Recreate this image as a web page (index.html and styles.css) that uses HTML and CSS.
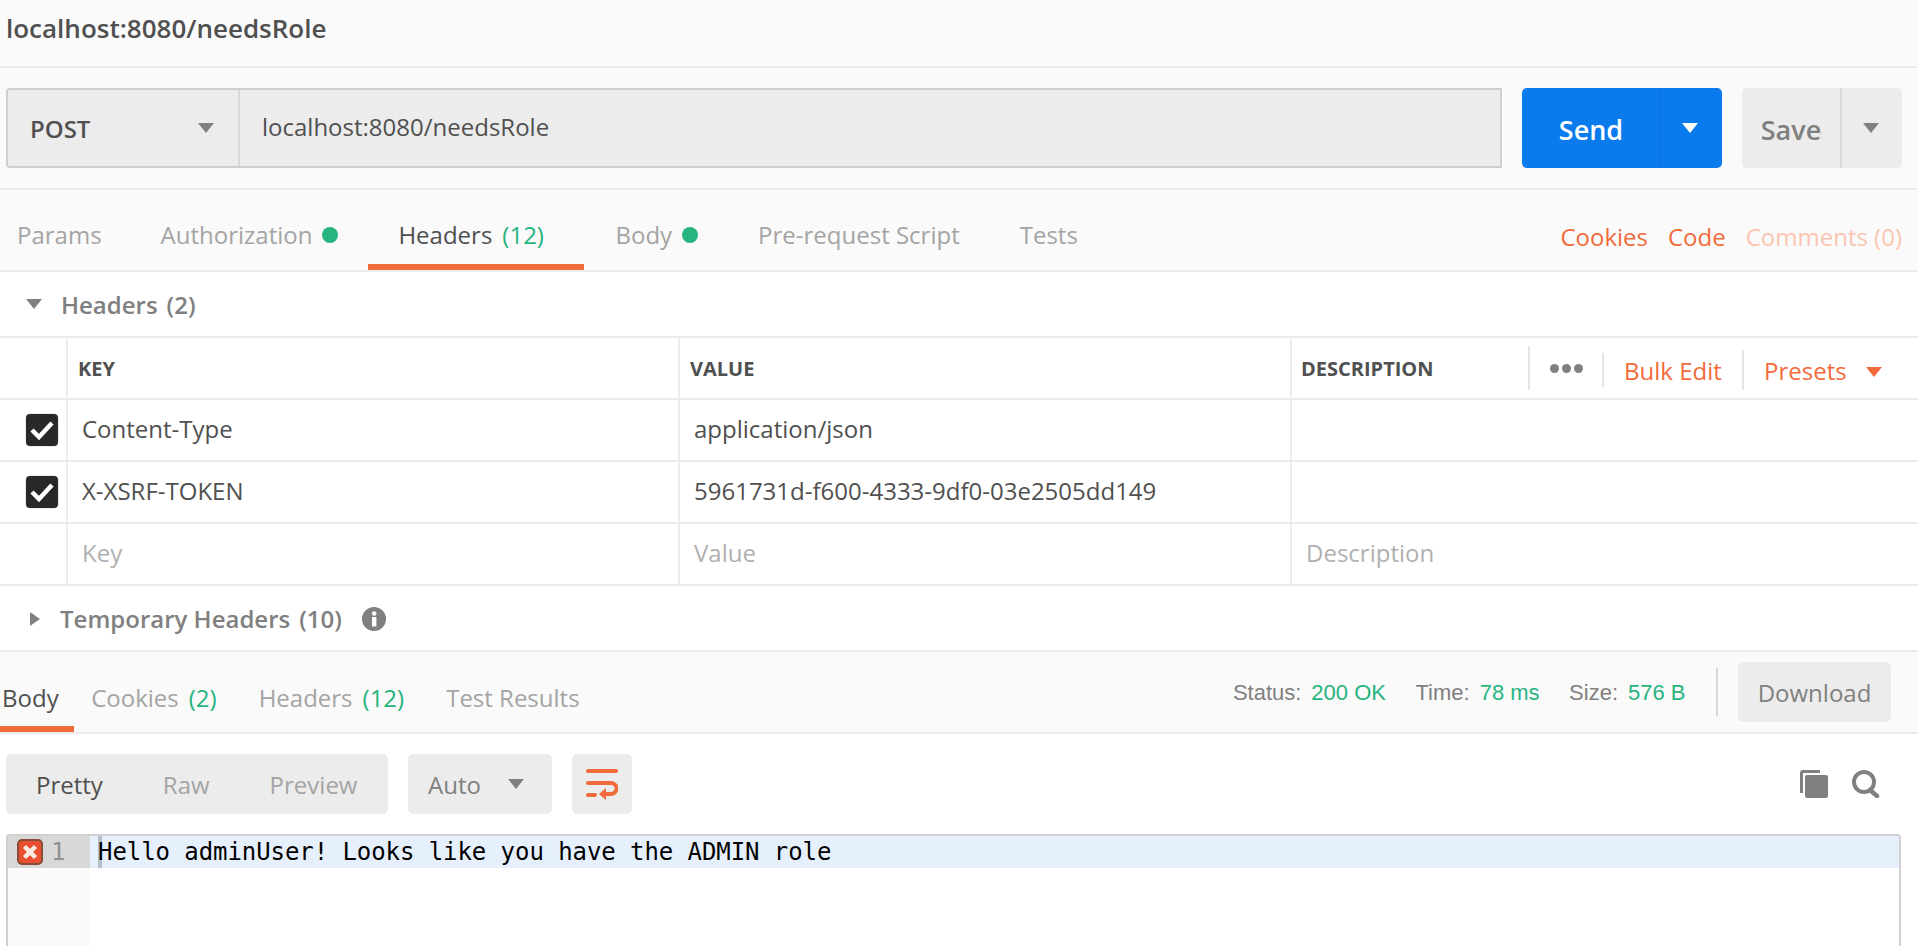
FILE: index.html
```html
<!DOCTYPE html>
<html lang="en">
<head>
    <meta charset="UTF-8">
    <title>localhost:8080/needsRole</title>
    <link rel="stylesheet" href="styles.css">
</head>
<body>
    <!-- Request -->
    <div class="title-bar">localhost:8080/needsRole</div>

    <div class="url-row">
        <div class="url-box">
            <div class="method">POST<span class="caret"></span></div>
            <div class="url-text">localhost:8080/needsRole</div>
        </div>
        <div class="send-btn">
            <span class="send-label">Send</span>
            <span class="send-arrow"><span class="caret caret-white"></span></span>
        </div>
        <div class="save-btn">
            <span class="save-label">Save</span>
            <span class="save-arrow"><span class="caret"></span></span>
        </div>
    </div>

    <div class="tabs">
        <span class="tab tab-first">Params</span>
        <span class="tab">Authorization<i class="dot"></i></span>
        <span class="tab tab-active">Headers<em class="count">(12)</em></span>
        <span class="tab">Body<i class="dot"></i></span>
        <span class="tab">Pre-request Script</span>
        <span class="tab">Tests</span>
        <div class="tab-links">
            <span class="link">Cookies</span>
            <span class="link">Code</span>
            <span class="link link-faded">Comments (0)</span>
        </div>
    </div>

    <div class="section-title">
        <span class="caret"></span>Headers<span class="section-count">(2)</span>
    </div>

    <div class="kv-table">
        <div class="kv-row kv-head">
            <div class="cell"></div>
            <div class="cell head-cell">KEY</div>
            <div class="cell head-cell">VALUE</div>
            <div class="cell head-cell desc-head">
                <span class="desc-label">DESCRIPTION</span>
                <span class="sep sep-a"></span>
                <span class="dots"><i></i><i></i><i></i></span>
                <span class="sep sep-b"></span>
                <span class="link bulk">Bulk Edit</span>
                <span class="sep sep-c"></span>
                <span class="link presets">Presets</span>
                <span class="caret caret-orange"></span>
            </div>
        </div>
        <div class="kv-row">
            <div class="cell check-cell">
                <span class="check"><svg width="24" height="24" viewBox="0 0 24 24"><path d="M2 12l7 7L22 5" fill="none" stroke="#fff" stroke-width="4.500"/></svg></span>
            </div>
            <div class="cell">Content-Type</div>
            <div class="cell">application/json</div>
            <div class="cell"></div>
        </div>
        <div class="kv-row">
            <div class="cell check-cell">
                <span class="check"><svg width="24" height="24" viewBox="0 0 24 24"><path d="M2 12l7 7L22 5" fill="none" stroke="#fff" stroke-width="4.500"/></svg></span>
            </div>
            <div class="cell">X-XSRF-TOKEN</div>
            <div class="cell">5961731d-f600-4333-9df0-03e2505dd149</div>
            <div class="cell"></div>
        </div>
        <div class="kv-row kv-empty">
            <div class="cell"></div>
            <div class="cell">Key</div>
            <div class="cell">Value</div>
            <div class="cell">Description</div>
        </div>
    </div>

    <div class="section-title temp-title">
        <span class="caret-right"></span>Temporary Headers<span class="section-count">(10)</span>
        <svg class="info" width="24" height="24" viewBox="0 0 24 24"><circle cx="12" cy="12" r="12" fill="#808080"/><rect x="10" y="10" width="4.400" height="9.500" fill="#fff"/><circle cx="12.200" cy="6.500" r="2.300" fill="#fff"/></svg>
    </div>

    <!-- Response -->
    <div class="res-tabs">
        <span class="res-tab res-active">Body</span>
        <span class="res-tab res-cookies">Cookies<em class="count">(2)</em></span>
        <span class="res-tab">Headers<em class="count">(12)</em></span>
        <span class="res-tab">Test Results</span>
        <div class="res-meta">
            <span class="meta-label">Status:</span><span class="meta-value">200 OK</span>
            <span class="meta-label">Time:</span><span class="meta-value">78 ms</span>
            <span class="meta-label">Size:</span><span class="meta-value">576 B</span>
            <span class="meta-sep"></span>
            <span class="download">Download</span>
        </div>
    </div>

    <div class="res-tools">
        <div class="view-group">
            <span class="view view-active">Pretty</span>
            <span class="view view-raw">Raw</span>
            <span class="view view-preview">Preview</span>
        </div>
        <div class="auto-box">Auto<span class="caret"></span></div>
        <div class="wrap-btn">
            <svg width="32" height="32" viewBox="0 0 32 32" fill="none" stroke="#f26b3a" stroke-width="4" stroke-linecap="round">
                <path d="M2 3h28"/>
                <path d="M2 15h23a5 5 0 0 1 0 11h-5"/>
                <path d="M2 27h7"/>
                <path d="M20 20v12l-7-6z" fill="#f26b3a" stroke="none"/>
            </svg>
        </div>
        <div class="tool-icons">
            <svg width="28" height="28" viewBox="0 0 28 28"><path d="M0 3a3 3 0 0 1 3-3h17v3H3v20H0z" fill="#808080"/><path d="M5 7a2 2 0 0 1 2-2h19a2 2 0 0 1 2 2v19a2 2 0 0 1-2 2H7a2 2 0 0 1-2-2z" fill="#808080"/></svg>
            <svg width="28" height="28" viewBox="0 0 28 28" fill="none" stroke="#808080"><circle cx="12" cy="12" r="10" stroke-width="4"/><path d="M18 20l7 6" stroke-width="4.500" stroke-linecap="round"/></svg>
        </div>
    </div>

    <div class="editor">
        <div class="gutter">
            <div class="gutter-active">
                <svg class="err" width="26" height="26" viewBox="0 0 26 26"><rect x="1" y="1" width="24" height="24" rx="4" fill="#e9502f" stroke="#8a4a38" stroke-width="2"/><path d="M7.500 7.500l11 11M18.500 7.500l-11 11" stroke="#fbe9e4" stroke-width="4.500"/></svg>
                <span class="line-no">1</span>
            </div>
        </div>
        <div class="code">
            <div class="code-line"><span class="cursor"></span><span class="code-text">Hello adminUser! Looks like you have the ADMIN role</span></div>
        </div>
    </div>
</body>
</html>
```

FILE: styles.css
```css
html, body {
    height: 100%;
}

body {
    margin: 0;
    background-color: #fff;
    color: #505050;
    font-family: "Open Sans", sans-serif;
    font-size: 24px;
    overflow: hidden;
}

em, i {
    font-style: normal;
}

.caret {
    display: inline-block;
    width: 0;
    height: 0;
    border-left: 8px solid transparent;
    border-right: 8px solid transparent;
    border-top: 10px solid #808080;
}

.caret-white {
    border-top-color: #fff;
}

.caret-orange {
    border-top-color: #f26b3a;
}

.caret-right {
    display: inline-block;
    width: 0;
    height: 0;
    border-top: 7px solid transparent;
    border-bottom: 7px solid transparent;
    border-left: 10px solid #808080;
    margin: 0 20px 0 30px;
}

.link {
    color: #f26b3a;
}

.count {
    color: #26b47f;
    margin-left: 10px;
}

.title-bar {
    height: 68px;
    box-sizing: border-box;
    padding: 0 0 11px 6px;
    display: flex;
    align-items: center;
    background-color: #fafafa;
    border-bottom: 2px solid #ececec;
    font-size: 26px;
    font-weight: 600;
}

.url-row {
    height: 122px;
    box-sizing: border-box;
    padding: 20px 16px 20px 6px;
    display: flex;
    background-color: #fafafa;
    border-bottom: 2px solid #ececec;
}

.url-box {
    width: 1496px;
    box-sizing: border-box;
    display: flex;
    background-color: #ececec;
    border: 2px solid #d0d0d0;
    border-radius: 4px 0 0 4px;
}

.method {
    width: 232px;
    box-sizing: border-box;
    padding: 0 24px 0 22px;
    display: flex;
    align-items: center;
    justify-content: space-between;
    border-right: 2px solid #d8d8d8;
    font-weight: 600;
}

.url-text {
    padding: 0 0 4px 22px;
    display: flex;
    align-items: center;
}

.send-btn, .save-btn {
    height: 80px;
    display: flex;
    border-radius: 5px;
    font-weight: 600;
    font-size: 27px;
}

.send-btn {
    width: 200px;
    margin-left: 20px;
    background-color: #097bed;
    color: #fff;
}

.send-label {
    width: 138px;
    padding-top: 2px;
    display: flex;
    align-items: center;
    justify-content: center;
    border-right: 1px solid #0a6ed2;
}

.send-arrow, .save-arrow {
    flex: 1;
    padding-right: 4px;
    display: flex;
    align-items: center;
    justify-content: center;
}

.save-arrow {
    padding-right: 2px;
}

.save-btn {
    width: 160px;
    margin-left: 20px;
    background-color: #ececec;
    color: #808080;
}

.save-label {
    width: 98px;
    padding-top: 2px;
    display: flex;
    align-items: center;
    justify-content: center;
    border-right: 2px solid #d8d8d8;
}

.tabs {
    height: 82px;
    box-sizing: border-box;
    display: flex;
    align-items: stretch;
    background-color: #fafafa;
    border-bottom: 2px solid #ececec;
    color: #a4a4a4;
}

.tab {
    padding: 9px 30px 0;
    display: flex;
    align-items: center;
}

.tab-first {
    padding: 9px 29px 0 17px;
}

.tab-active {
    padding: 15px 40px 0 30px;
    border-bottom: 6px solid #f26b3a;
    color: #505050;
}

.tab-active + .tab {
    margin-left: 1.5px;
}

.dot {
    width: 16px;
    height: 16px;
    margin-left: 10px;
    border-radius: 50%;
    background-color: #26b47f;
}

.tab-links {
    margin-left: auto;
    padding: 13px 16px 0 0;
    display: flex;
    align-items: center;
    gap: 20px;
}

.link-faded {
    color: #fbc5b2;
}

.section-title {
    height: 64px;
    box-sizing: border-box;
    display: flex;
    align-items: center;
    color: #808080;
    font-weight: 600;
}

.section-title .caret {
    margin: 0 19px 0 26px;
}

.section-count {
    margin-left: 9px;
}

.kv-table {
    border-top: 2px solid #ececec;
}

.kv-row {
    height: 62px;
    box-sizing: border-box;
    display: grid;
    grid-template-columns: 68px 612px 612px 1fr;
    border-bottom: 2px solid #ececec;
}

.cell {
    padding: 0 0 4px 14px;
    display: flex;
    align-items: center;
    border-right: 2px solid #ececec;
}

.cell:first-child {
    padding: 0;
}

.cell:last-child {
    border-right: none;
}

.head-cell {
    padding: 0 0 0 10px;
    font-size: 20px;
    font-weight: 700;
}

.desc-head {
    padding-left: 9px;
}

.desc-label {
    width: 227px;
}

.sep {
    width: 2px;
    background-color: #e4e4e4;
}

.sep-a {
    height: 44px;
}

.dots {
    width: 72px;
    padding-left: 20px;
    box-sizing: border-box;
    display: flex;
    gap: 3px;
}

.dots i {
    width: 9px;
    height: 9px;
    border-radius: 50%;
    background-color: #808080;
}

.sep-b {
    height: 34px;
    margin-top: 3px;
}

.bulk {
    width: 138px;
    padding: 4px 0 0 20px;
    box-sizing: border-box;
    font-size: 24px;
    font-weight: 400;
}

.sep-c {
    height: 40px;
    margin-top: 3px;
}

.presets {
    padding: 4px 0 0 20px;
    font-size: 24px;
    font-weight: 400;
}

.desc-head .caret {
    margin: 7px 0 0 19px;
}

.cell.check-cell {
    justify-content: flex-start;
    padding: 0 0 0 26px;
}

.check {
    width: 32px;
    height: 32px;
    flex: none;
    display: flex;
    align-items: center;
    justify-content: center;
    background-color: #282828;
    border-radius: 4px;
    box-shadow: 0 0 0 1px #ececec;
}

.kv-empty {
    color: #b0b0b0;
}

.temp-title {
    height: 66px;
    padding-top: 1px;
    border-bottom: 2px solid #ececec;
}

.info {
    margin-left: 20px;
}

.res-tabs {
    height: 82px;
    box-sizing: border-box;
    display: flex;
    align-items: stretch;
    background-color: #fafafa;
    border-bottom: 2px solid #ececec;
    color: #a4a4a4;
}

.res-tab {
    padding: 11px 21.5px 0 20.5px;
    display: flex;
    align-items: center;
}

.res-active {
    padding: 17px 15px 0 2px;
    border-bottom: 6px solid #f26b3a;
    color: #505050;
}

.res-cookies {
    margin-left: -3px;
}

.res-meta {
    margin-left: auto;
    padding-right: 27px;
    display: flex;
    align-items: center;
    font-family: "Liberation Sans", sans-serif;
    font-size: 22px;
    color: #808080;
}

.meta-label {
    padding-top: 2px;
}

.meta-value {
    padding-top: 2px;
    color: #26b47f;
    margin: 0 29.5px 0 10px;
}

.meta-sep {
    width: 2px;
    height: 48px;
    background-color: #d8d8d8;
    margin-left: 1px;
}

.download {
    width: 153px;
    height: 60px;
    margin-left: 20px;
    display: flex;
    align-items: center;
    justify-content: center;
    background-color: #ececec;
    border-radius: 5px;
    font-family: "Open Sans", sans-serif;
    font-size: 24px;
}

.res-tools {
    height: 100px;
    box-sizing: border-box;
    padding: 20px 38px 20px 6px;
    display: flex;
}

.view-group {
    width: 382px;
    display: flex;
    align-items: center;
    background-color: #ececec;
    border-radius: 5px;
    color: #a4a4a4;
}

.view-active {
    margin-left: 30px;
    color: #505050;
}

.view-raw {
    margin-left: 60px;
}

.view-preview {
    margin-left: 60px;
}

.auto-box {
    width: 144px;
    margin-left: 20px;
    padding: 0 28px 0 20px;
    box-sizing: border-box;
    display: flex;
    align-items: center;
    justify-content: space-between;
    background-color: #ececec;
    border-radius: 5px;
    color: #808080;
}

.wrap-btn {
    width: 60px;
    margin-left: 20px;
    display: flex;
    align-items: center;
    justify-content: center;
    background-color: #ececec;
    border-radius: 5px;
}

.tool-icons {
    margin-left: auto;
    display: flex;
    align-items: center;
    gap: 24px;
}

.editor {
    height: 112px;
    margin: 0 17px 0 6px;
    display: flex;
    border: 2px solid #d0d0d0;
    border-bottom: none;
    border-radius: 4px 4px 0 0;
}

.gutter {
    width: 82px;
    background-color: #fafafa;
}

.gutter-active {
    height: 32px;
    padding-left: 9px;
    display: flex;
    align-items: center;
    background-color: #d8d8d8;
}

.line-no {
    margin-left: 8px;
    color: #909090;
    font-family: "DejaVu Sans Mono", monospace;
    font-size: 24px;
}

.code {
    flex: 1;
}

.code-line {
    height: 32px;
    padding-left: 8px;
    display: flex;
    align-items: center;
    position: relative;
    background-color: #e6f0fc;
    color: #000;
    font-family: "DejaVu Sans Mono", monospace;
    font-size: 24px;
    letter-spacing: -0.07px;
    white-space: pre;
}

.cursor {
    position: absolute;
    left: 8px;
    top: 0;
    width: 4px;
    height: 32px;
    background-color: #b4c0cc;
}

.code-text {
    position: relative;
}
```
